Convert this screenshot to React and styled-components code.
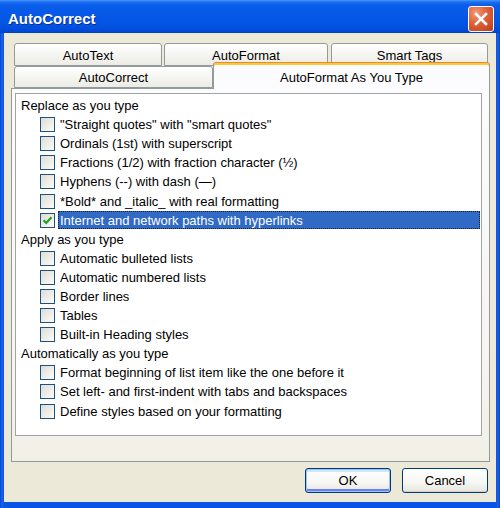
import React from "react";
import styled, { createGlobalStyle } from "styled-components";

const Global = createGlobalStyle`
  html, body { margin: 0; padding: 0; background: #ffffff; }
  body { font-family: "Liberation Sans", Arial, sans-serif; }
  * { box-sizing: border-box; }
`;

const Window = styled.div`
  width: 500px;
  height: 508px;
  display: flex;
  flex-direction: column;
  background: linear-gradient(to right, #0847d6 0px, #1a63ec 2px, #0a54e4 4px, #0a54e4 496px, #1a5fe6 498px, #0840c8 500px);
  overflow: hidden;
`;

const TitleBar = styled.div`
  height: 33px;
  flex: none;
  display: flex;
  align-items: center;
  justify-content: space-between;
  padding: 0 6px 0 8px;
  background: linear-gradient(to bottom, #4a96fc 0px, #1c6ff2 2px, #0a5eea 5px, #0557e6 16px, #0253e2 26px, #0149d8 31px, #003ec9 33px);
`;

const Title = styled.span`
  color: #ffffff;
  font-family: "Liberation Sans", Arial, sans-serif;
  font-weight: bold;
  font-size: 15px;
  text-shadow: 1px 1px 0 #0a2a9a;
  margin-top: 4px;
`;

const CloseButton = styled.div`
  width: 26px;
  height: 26px;
  margin-top: 4px;
  border: 1px solid #ffffff;
  border-radius: 3px;
  background: radial-gradient(circle at 30% 25%, #f19a7a 0%, #e2643c 40%, #c94a22 80%, #b33d18 100%);
  display: flex;
  align-items: center;
  justify-content: center;
`;

const Body = styled.div`
  flex: 1;
  margin: 0 4px 6px 4px;
  background: #ece9d8;
  padding: 10px 6px 0 7px;
  display: flex;
  flex-direction: column;
`;

const TabStrip = styled.div`
  height: 45px;
  display: flex;
  flex-direction: column;
  position: relative;
  z-index: 2;
`;

const TabRow = styled.div`
  height: ${(p) => p.$h}px;
  display: flex;
  align-items: flex-end;
  padding-left: 3px;
`;

const Tab = styled.div`
  width: ${(p) => p.$w}px;
  height: ${(p) => p.$h}px;
  margin-right: ${(p) => p.$mr || 0}px;
  flex: none;
  border: 1px solid #919b9c;
  border-bottom: ${(p) => (p.$selected ? "none" : "1px solid #919b9c")};
  border-radius: 3px 3px 0 0;
  background: ${(p) =>
    p.$selected
      ? "#fcfcfe"
      : "linear-gradient(to bottom, #ffffff 0%, #f7f7f4 40%, #ecebe5 100%)"};
  display: flex;
  align-items: center;
  justify-content: center;
  font-size: 13px;
  color: #000;
  position: relative;
  padding-top: ${(p) => (p.$selected ? 3 : 1)}px;
  margin-bottom: ${(p) => (p.$selected ? -1 : 0)}px;
  ${(p) =>
    p.$selected &&
    `
    border-top: 1px solid #e68b2c;
    box-shadow: inset 0 2px 0 #ffc73c;
  `}
`;

const Panel = styled.div`
  height: 374px;
  flex: none;
  border: 1px solid #919b9c;
  background: linear-gradient(to bottom, #fcfcfe 0%, #f6f5f0 70%, #f1efe6 100%);
  padding: 4px 7px 25px 3px;
  display: flex;
  position: relative;
  z-index: 1;
`;

const ListBox = styled.div`
  flex: 1;
  background: #ffffff;
  border: 1px solid #a0a4a8;
  padding-top: 2px;
  display: flex;
  flex-direction: column;
`;

const Header = styled.div`
  height: 19.1px;
  flex: none;
  display: flex;
  align-items: center;
  padding-left: 5px;
  font-size: 13px;
  color: #000;
`;

const Item = styled.div`
  height: 19.1px;
  flex: none;
  display: flex;
  align-items: center;
  padding-left: 24px;
`;

const Box = styled.div`
  width: 15px;
  height: 15px;
  flex: none;
  border: 1px solid #1c5180;
  background: linear-gradient(135deg, #dcdcd7 0%, #eceae4 45%, #fbfbf9 100%);
  display: flex;
  align-items: center;
  justify-content: center;
`;

const Label = styled.div`
  flex: 1;
  height: 18px;
  margin-left: 3px;
  margin-right: 1px;
  padding-left: 2px;
  display: flex;
  align-items: center;
  font-size: 13px;
  white-space: nowrap;
  color: ${(p) => (p.$selected ? "#ffffff" : "#000000")};
  background: ${(p) => (p.$selected ? "#316ac5" : "transparent")};
  outline: ${(p) => (p.$selected ? "1px dotted #1b1b3a" : "none")};
  outline-offset: -1px;
`;

const Footer = styled.div`
  margin-top: 6px;
  height: 25px;
  display: flex;
  justify-content: flex-end;
  gap: 11px;
  padding-right: 2px;
`;

const Button = styled.div`
  width: 86px;
  height: 25px;
  border: 1px solid #003c74;
  border-radius: 3px;
  background: linear-gradient(to bottom, #ffffff 0%, #f6f6f3 60%, #e6e5de 100%);
  display: flex;
  align-items: center;
  justify-content: center;
  font-size: 13px;
  color: #000;
  box-shadow: ${(p) =>
    p.$default
      ? "inset 0 0 0 1px #9fc1f5, inset 0 -2px 0 1px #6982ee, inset 0 2px 0 1px #cee7ff"
      : "inset 0 -1px 0 #d6d0c5"};
`;

const Check = () => (
  <svg width="11" height="11" viewBox="0 0 11 11">
    <path d="M1.5 5.2 L4.2 8 L9.5 2.2" fill="none" stroke="#21a121" strokeWidth="2.2" />
  </svg>
);

const groups = [
  {
    title: "Replace as you type",
    items: [
      { t: '"Straight quotes" with "smart quotes"' },
      { t: "Ordinals (1st) with superscript" },
      { t: "Fractions (1/2) with fraction character (½)" },
      { t: "Hyphens (--) with dash (—)" },
      { t: "*Bold* and _italic_ with real formatting" },
      { t: "Internet and network paths with hyperlinks", checked: true, selected: true },
    ],
  },
  {
    title: "Apply as you type",
    items: [
      { t: "Automatic bulleted lists" },
      { t: "Automatic numbered lists" },
      { t: "Border lines" },
      { t: "Tables" },
      { t: "Built-in Heading styles" },
    ],
  },
  {
    title: "Automatically as you type",
    items: [
      { t: "Format beginning of list item like the one before it" },
      { t: "Set left- and first-indent with tabs and backspaces" },
      { t: "Define styles based on your formatting" },
    ],
  },
];

export default function App() {
  return (
    <>
      <Global />
      <Window>
        <TitleBar>
          <Title>AutoCorrect</Title>
          <CloseButton>
            <svg width="14" height="14" viewBox="0 0 14 14">
              <path d="M2 2 L12 12 M12 2 L2 12" stroke="#ffffff" strokeWidth="2.6" strokeLinecap="square" />
            </svg>
          </CloseButton>
        </TitleBar>
        <Body>
          <TabStrip>
            <TabRow $h={23}>
              <Tab $w={148} $h={23} $mr={2}>AutoText</Tab>
              <Tab $w={164} $h={23} $mr={3}>AutoFormat</Tab>
              <Tab $w={157} $h={23}>Smart Tags</Tab>
            </TabRow>
            <TabRow $h={22}>
              <Tab $w={199} $h={22}>AutoCorrect</Tab>
              <Tab $w={277} $h={27} $selected>AutoFormat As You Type</Tab>
            </TabRow>
          </TabStrip>
          <Panel>
            <ListBox>
              {groups.map((g) => (
                <React.Fragment key={g.title}>
                  <Header>{g.title}</Header>
                  {g.items.map((it) => (
                    <Item key={it.t}>
                      <Box>{it.checked && <Check />}</Box>
                      <Label $selected={it.selected}>{it.t}</Label>
                    </Item>
                  ))}
                </React.Fragment>
              ))}
            </ListBox>
          </Panel>
          <Footer>
            <Button $default>OK</Button>
            <Button>Cancel</Button>
          </Footer>
        </Body>
      </Window>
    </>
  );
}
